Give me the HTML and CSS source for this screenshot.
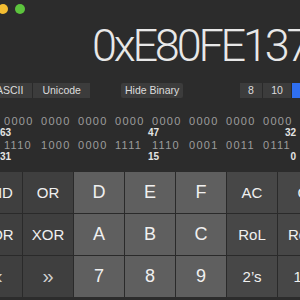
FILE: index.html
```html
<!DOCTYPE html>
<html lang="en">
<head>
    <meta charset="UTF-8">
    <meta name="viewport" content="width=device-width, initial-scale=1.0">
    <title>Calculator - Programmer</title>
    <link rel="stylesheet" href="styles.css">
</head>
<body>
    <div class="window">
        <div class="titlebar">
            <span class="light red"></span>
            <span class="light yellow"></span>
            <span class="light green"></span>
        </div>

        <div class="display">0xE80FE137</div>

        <div class="controls">
            <div class="segment">
                <button>ASCII</button>
                <button>Unicode</button>
            </div>
            <button class="toggle">Hide Binary</button>
            <div class="segment bases">
                <button>8</button>
                <button>10</button>
                <button class="active">16</button>
            </div>
        </div>

        <div class="bits">
            <div class="bit-row">
                <span>0000</span><span>0000</span><span>0000</span><span>0000</span>
                <span>0000</span><span>0000</span><span>0000</span><span>0000</span>
            </div>
            <div class="bit-labels">
                <span class="first">63</span><span></span><span></span><span></span>
                <span class="first">47</span><span></span><span></span><span class="last">32</span>
            </div>
            <div class="bit-row">
                <span>1110</span><span>1000</span><span>0000</span><span>1111</span>
                <span>1110</span><span>0001</span><span>0011</span><span>0111</span>
            </div>
            <div class="bit-labels">
                <span class="first">31</span><span></span><span></span><span></span>
                <span class="first">15</span><span></span><span></span><span class="last">0</span>
            </div>
        </div>

        <div class="keypad">
            <button class="key op">AND</button>
            <button class="key op">OR</button>
            <button class="key digit">D</button>
            <button class="key digit">E</button>
            <button class="key digit">F</button>
            <button class="key fn">AC</button>
            <button class="key fn">C</button>

            <button class="key op">NOR</button>
            <button class="key op">XOR</button>
            <button class="key digit">A</button>
            <button class="key digit">B</button>
            <button class="key digit">C</button>
            <button class="key fn">RoL</button>
            <button class="key fn">RoR</button>

            <button class="key op shift">&laquo;</button>
            <button class="key op shift">&raquo;</button>
            <button class="key digit">7</button>
            <button class="key digit">8</button>
            <button class="key digit">9</button>
            <button class="key fn">2&rsquo;s</button>
            <button class="key fn">1&rsquo;s</button>
        </div>
    </div>
</body>
</html>
```

FILE: styles.css
```css
body {
    margin: 0;
    background-color: #2c2c2c;
    font-family: "Liberation Sans", Arial, sans-serif;
    overflow: hidden;
}
.window {
    width: 300px;
    height: 300px;
    overflow: hidden;
}
.titlebar {
    display: flex;
    gap: 7px;
    height: 18px;
    align-items: center;
    margin-left: -19px;
}
.light {
    width: 10px;
    height: 10px;
    border-radius: 50%;
}
.red { background: #fc5f57; }
.yellow { background: #f3bd32; }
.green { background: #5cc43d; }

.display {
    margin-top: 5px;
    padding-left: 92px;
    height: 45px;
    font-family: Roboto, "Liberation Sans", sans-serif;
    font-weight: 300;
    font-size: 45px;
    line-height: 45px;
    letter-spacing: -3.2px;
    color: #e8e8e8;
    white-space: nowrap;
}

.controls {
    display: flex;
    align-items: center;
    margin-top: 15px;
    height: 15px;
}
.controls button {
    height: 15px;
    padding: 0 9px;
    border: none;
    background: #3c3c3c;
    color: #dcdcdc;
    font-family: "Liberation Sans", Arial, sans-serif;
    font-size: 10.5px;
    line-height: 15px;
    white-space: nowrap;
}
.segment {
    display: flex;
    gap: 1px;
    background: #2a2a2a;
}
.segment:first-child {
    margin-left: -13px;
}
.toggle {
    margin-left: 31px;
}
.controls .toggle {
    padding: 0 4px;
    border-radius: 2px;
}
.bases {
    margin-left: auto;
    margin-right: -22px;
}
.bases button {
    width: 22px;
    padding: 0;
}
.bases button:nth-child(2) {
    width: 28px;
}
.bases .active {
    width: 30px;
    background: #2f6ff0;
}

.bits {
    margin-top: 16px;
    padding-left: 4px;
}
.bit-row,
.bit-labels {
    display: grid;
    grid-template-columns: repeat(8, 29px);
    column-gap: 8px;
}
.bit-row {
    height: 14px;
    font-size: 11px;
    line-height: 14px;
    letter-spacing: 1.3px;
    color: #9c9c9c;
}
.bit-labels {
    height: 10px;
    font-size: 10px;
    line-height: 10px;
    font-weight: bold;
    color: #e4e4e4;
}
.bit-labels .first {
    margin-left: -4px;
}
.bit-labels .last {
    text-align: right;
    margin-right: -4px;
}

.keypad {
    display: grid;
    grid-template-columns: repeat(7, 50px);
    grid-auto-rows: 41px;
    gap: 1px;
    margin-top: 10px;
    margin-left: -28px;
    background: #2a2a2a;
    width: 356px;
}
.key {
    border: none;
    padding: 0;
    color: #f0f0f0;
    font-family: "Liberation Sans", Arial, sans-serif;
    font-size: 15px;
}
.op {
    background: #3f3f3f;
}
.fn {
    background: #474747;
}
.digit {
    background: #5f5f5f;
    font-size: 18px;
}
.shift {
    font-size: 20px;
    color: #cfcfcf;
}
```
